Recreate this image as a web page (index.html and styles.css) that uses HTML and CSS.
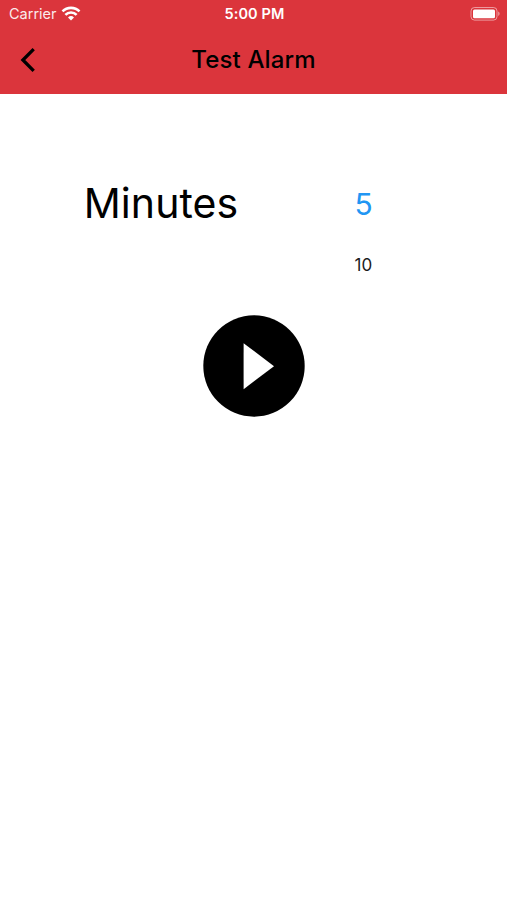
FILE: index.html
```html
<!DOCTYPE html>
<html lang="en">
<head>
  <meta charset="UTF-8" />
  <meta name="viewport" content="width=device-width, initial-scale=1.0"/>
  <title>Test Alarm</title>
  <link rel="stylesheet" href="styles.css">
</head>
<body>
  <header class="header">
    <div class="status-bar">
      <div class="carrier">
        <span class="carrier-name">Carrier</span>
        <svg class="wifi" width="20" height="15" viewBox="0 0 20 15">
          <path d="M1.5 5.4a12 12 0 0 1 17 0M4.4 8.8a7.8 7.8 0 0 1 11.2 0" fill="none" stroke="#fff" stroke-width="2.6"/>
          <path d="M10 14.6L7 11.5a4.3 4.3 0 0 1 6 0z" fill="#fff"/>
        </svg>
      </div>
      <span class="time">5:00 PM</span>
      <svg class="battery" width="30" height="14" viewBox="0 0 30 14">
        <rect x="1" y="0.5" width="26" height="12.6" rx="3.5" fill="none" stroke="#fff" stroke-opacity="0.5"/>
        <rect x="3" y="2.4" width="22" height="8.8" rx="1.5" fill="#fff"/>
        <path d="M28.2 4.5v4.4a2.4 2.4 0 0 0 0-4.4z" fill="#fff" fill-opacity="0.5"/>
      </svg>
    </div>
    <div class="nav-bar">
      <button class="back" aria-label="Back">
        <svg width="16" height="26" viewBox="0 0 16 26">
          <path d="M13.7 2.2L2.9 13l10.8 10.8" fill="none" stroke="#000" stroke-width="3.3"/>
        </svg>
      </button>
      <h1 class="title">Test Alarm</h1>
    </div>
  </header>

  <main class="alarm">
    <div class="picker-row">
      <span class="label">Minutes</span>
      <div class="picker">
        <span class="option selected">5</span>
        <span class="option">10</span>
      </div>
    </div>
    <button class="play" aria-label="Play">
      <svg width="102" height="102" viewBox="0 0 102 102">
        <circle cx="51" cy="51" r="50.7" fill="#000"/>
        <path d="M40.6 28.2v46l30.4-23z" fill="#fff"/>
      </svg>
    </button>
  </main>
</body>
</html>
```

FILE: styles.css
```css
body {
  margin: 0;
  font-family: Inter, sans-serif;
  background-color: #ffffff;
  color: #000000;
}

button {
  padding: 0;
  border: none;
  background: none;
  cursor: pointer;
}

svg {
  display: block;
}

.header {
  height: 94px;
  background-color: #db353c;
}

.status-bar {
  display: grid;
  grid-template-columns: 1fr auto 1fr;
  align-items: center;
  height: 27px;
  padding: 0 7px 0 9px;
  color: #ffffff;
}

.carrier {
  display: flex;
  align-items: center;
  gap: 4px;
}

.carrier-name {
  font-size: 14.5px;
  opacity: 0.9;
}

.time {
  font-size: 14.5px;
  font-weight: 600;
  letter-spacing: 0.1px;
}

.battery {
  justify-self: end;
}

.nav-bar {
  display: grid;
  grid-template-columns: 60px 1fr 60px;
  align-items: center;
  height: 65px;
}

.back {
  padding-left: 20px;
}

.title {
  margin: 0;
  font-size: 24px;
  font-weight: 500;
  letter-spacing: 0.15px;
  text-align: center;
}

.alarm {
  display: flex;
  flex-direction: column;
  align-items: center;
}

.picker-row {
  display: flex;
  width: 100%;
  height: 221px;
}

.label {
  width: 322px;
  padding-top: 79px;
  line-height: 60px;
  font-size: 41px;
  letter-spacing: 0.1px;
  text-align: center;
}

.picker {
  display: flex;
  flex-direction: column;
  width: 83px;
  padding-top: 80px;
}

.option {
  line-height: 62px;
  font-size: 17px;
  letter-spacing: 0.3px;
  color: #1c1c1c;
  text-align: center;
}

.option.selected {
  line-height: 60px;
  font-size: 30px;
  letter-spacing: 0;
  color: #2196f3;
}
```
